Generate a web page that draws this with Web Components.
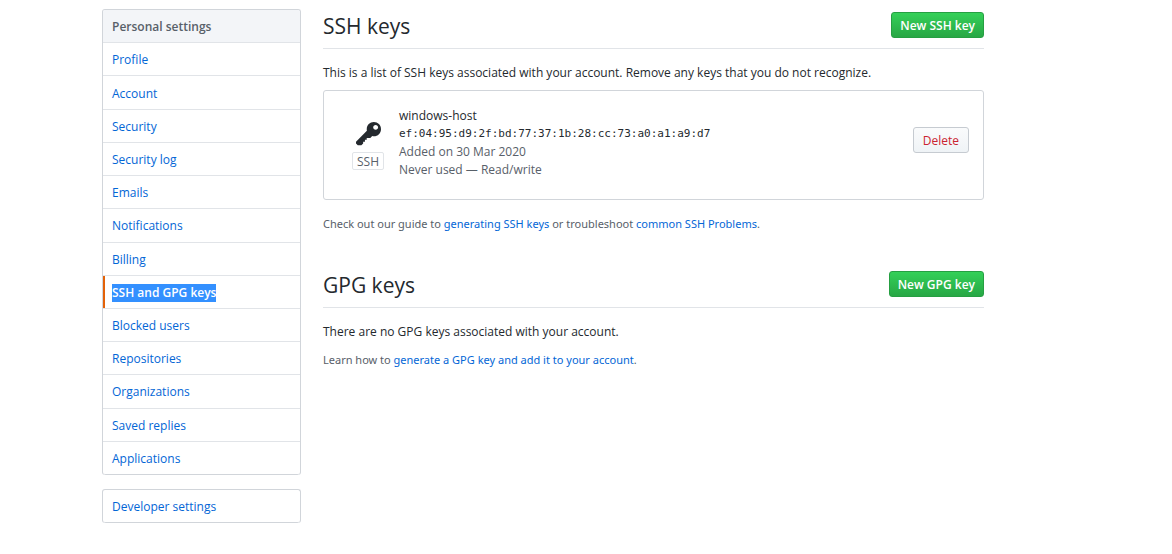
<!DOCTYPE html>
<html lang="en">
<head>
<meta charset="utf-8">
<title>SSH and GPG keys</title>
<style>
  body {
    margin: 0;
    background: #fff;
    color: #24292e;
    font: 13px/18px "Open Sans", "Noto Sans", sans-serif;
    --link: #0366d6;
    --muted: #586069;
    --line: #e1e4e8;
    --edge: #d1d5da;
    --body-size: 12px;
    --small-size: 11px;
  }
</style>
</head>
<body>
<settings-page>
  <settings-menu slot="menu" fill>
    <menu-heading>Personal settings</menu-heading>
    <menu-item>Profile</menu-item>
    <menu-item>Account</menu-item>
    <menu-item>Security</menu-item>
    <menu-item>Security log</menu-item>
    <menu-item>Emails</menu-item>
    <menu-item>Notifications</menu-item>
    <menu-item>Billing</menu-item>
    <menu-item current>SSH and GPG keys</menu-item>
    <menu-item>Blocked users</menu-item>
    <menu-item>Repositories</menu-item>
    <menu-item>Organizations</menu-item>
    <menu-item>Saved replies</menu-item>
    <menu-item>Applications</menu-item>
  </settings-menu>
  <settings-menu slot="menu">
    <menu-item>Developer settings</menu-item>
  </settings-menu>

  <key-section>
    <span slot="title">SSH keys</span>
    <action-button slot="action" kind="primary">New SSH key</action-button>
    <span slot="intro">This is a list of SSH keys associated with your account. Remove any keys that you do not recognize.</span>
    <key-card slot="list">
      <span slot="name">windows-host</span>
      <span slot="print">ef:04:95:d9:2f:bd:77:37:1b:28:cc:73:a0:a1:a9:d7</span>
      <span slot="added">Added on 30 Mar 2020</span>
      <span slot="used">Never used — Read/write</span>
    </key-card>
    <help-note slot="help">Check out our guide to <a href="#guide">generating SSH keys</a> or troubleshoot <a href="#problems">common SSH Problems</a>.</help-note>
  </key-section>
  <key-section>
    <span slot="title">GPG keys</span>
    <action-button slot="action" kind="primary">New GPG key</action-button>
    <span slot="intro">There are no GPG keys associated with your account.</span>
    <help-note slot="help">Learn how to <a href="#gpg">generate a GPG key and add it to your account</a>.</help-note>
  </key-section>
</settings-page>

<script>
  const define = (name, html, setup) => {
    const template = document.createElement('template');
    template.innerHTML = html;
    customElements.define(name, class extends HTMLElement {
      constructor() {
        super();
        this.attachShadow({ mode: 'open' }).append(template.content.cloneNode(true));
      }
      connectedCallback() {
        if (setup) setup(this, this.shadowRoot);
      }
    });
  };

  define('settings-page', `
    <style>
      :host { display: flex; align-items: flex-start; gap: 22px; box-sizing: border-box;
              max-width: 984px; padding: 9px 0 24px 102px; }
      nav { flex: 0 0 199px; display: grid; gap: 14px; }
      main { flex: 1; min-width: 0; }
    </style>
    <nav aria-label="Settings"><slot name="menu"></slot></nav>
    <main><slot></slot></main>`);

  define('settings-menu', `
    <style>
      :host { display: grid; grid-auto-rows: 1fr; box-sizing: border-box; min-height: 34px;
              border: 1px solid var(--edge); border-bottom: 0; border-radius: 3px; overflow: hidden; }
      :host([fill]) { min-height: 466px; }
    </style>
    <slot></slot>`);

  define('menu-heading', `
    <style>
      :host { display: flex; align-items: center; padding: 2px 9px 0; background: #f3f5f8;
              color: var(--muted); font-size: var(--body-size); font-weight: 600;
              border-bottom: 1px solid var(--line); }
    </style>
    <slot></slot>`);

  define('menu-item', `
    <style>
      :host { display: grid; border-bottom: 1px solid var(--line); }
      :host(:last-of-type) { border-bottom-color: var(--edge); border-radius: 0 0 3px 3px; }
      a { display: flex; align-items: center; padding: 2px 9px 0; color: var(--link);
          font-size: var(--body-size); text-decoration: none; }
      :host([current]) a { padding-left: 7px; border-left: 2px solid #e36209; color: #fff; font-weight: 600; }
      :host([current]) span { background: #3390ff; }
    </style>
    <a href="#"><span><slot></slot></span></a>`, (host, root) => {
      if (host.hasAttribute('current')) root.querySelector('a').setAttribute('aria-current', 'page');
    });

  define('action-button', `
    <style>
      :host { display: block; }
      button { display: block; box-sizing: border-box; height: 26px; padding: 2px 9px 0; border: 1px solid #c6cbd1;
               border-radius: 3px; background: linear-gradient(#fafbfc, #eff3f6); color: #cb2431;
               font: 600 var(--body-size)/18px "Open Sans", "Noto Sans", sans-serif; white-space: nowrap; }
      :host([kind="primary"]) button { padding: 2px 8px 0; border-color: #269f42; color: #fff;
               background: linear-gradient(#34d058, #28a745); }
      :host([kind="danger"]) button { font-weight: 500; }
    </style>
    <button type="button"><slot></slot></button>`);

  define('key-section', `
    <style>
      :host { display: block; margin-bottom: 35px; }
      header { display: flex; align-items: center; justify-content: space-between;
               height: 39px; border-bottom: 1px solid var(--line); }
      header ::slotted(action-button) { margin-bottom: 8px; }
      h2 { margin: 0 0 6px; font-size: 21px; line-height: 32px; font-weight: 400; }
      p { margin: 15px 0 8px; font-size: var(--body-size); line-height: 18px; }
    </style>
    <header><h2><slot name="title"></slot></h2><slot name="action"></slot></header>
    <p><slot name="intro"></slot></p>
    <slot name="list"></slot>
    <slot name="help"></slot>`);

  define('key-card', `
    <style>
      :host { display: flex; align-items: center; box-sizing: border-box; height: 110px; margin-bottom: 13px;
              padding: 0 14px 0 28px; border: 1px solid var(--edge); border-radius: 3px; }
      .badge { width: 32px; display: grid; justify-items: center; }
      svg { width: 25px; height: 29px; fill: #24292e; }
      .badge span { box-sizing: border-box; height: 18px; margin-top: 3px; padding: 0 4px; border: 1px solid var(--line);
              border-radius: 2px; color: var(--muted); font-size: var(--body-size); line-height: 17px; }
      .text { flex: 1; margin: 0 15px 4px; color: var(--muted); font-size: var(--body-size); line-height: 18px; }
      .text div { height: 18px; }
      .name { color: #24292e; font-weight: 500; }
      .print { color: #24292e; font: 11px/18px "DejaVu Sans Mono", monospace; }
      action-button { margin-bottom: 10px; }
    </style>
    <div class="badge">
      <svg viewBox="0 0 14 16" aria-hidden="true"><path fill-rule="evenodd" d="M12.83 2.17C12.08 1.42 11.14 1.03 10 1c-1.13.03-2.08.42-2.83 1.17S6.04 3.86 6.01 5c0 .3.03.59.09.89L0 12v1l1 1h2l1-1v-1h1v-1h1v-1h2l1.09-1.11c.3.08.59.11.91.11 1.14-.03 2.08-.42 2.83-1.17S13.97 6.14 14 5c-.03-1.14-.42-2.08-1.17-2.83zM11 5.38c-.77 0-1.38-.61-1.38-1.38 0-.77.61-1.38 1.38-1.38.77 0 1.38.61 1.38 1.38 0 .77-.61 1.38-1.38 1.38z"/></svg>
      <span>SSH</span>
    </div>
    <div class="text">
      <div class="name"><slot name="name"></slot></div>
      <div class="print"><slot name="print"></slot></div>
      <div><slot name="added"></slot></div>
      <div><slot name="used"></slot></div>
    </div>
    <action-button kind="danger">Delete</action-button>`);

  define('help-note', `
    <style>
      :host { display: block; padding-top: 2px; color: var(--muted);
              font: var(--small-size)/18px "Noto Sans", "Open Sans", sans-serif; }
      ::slotted(a) { color: var(--link); text-decoration: none; }
    </style>
    <slot></slot>`);
</script>
</body>
</html>
